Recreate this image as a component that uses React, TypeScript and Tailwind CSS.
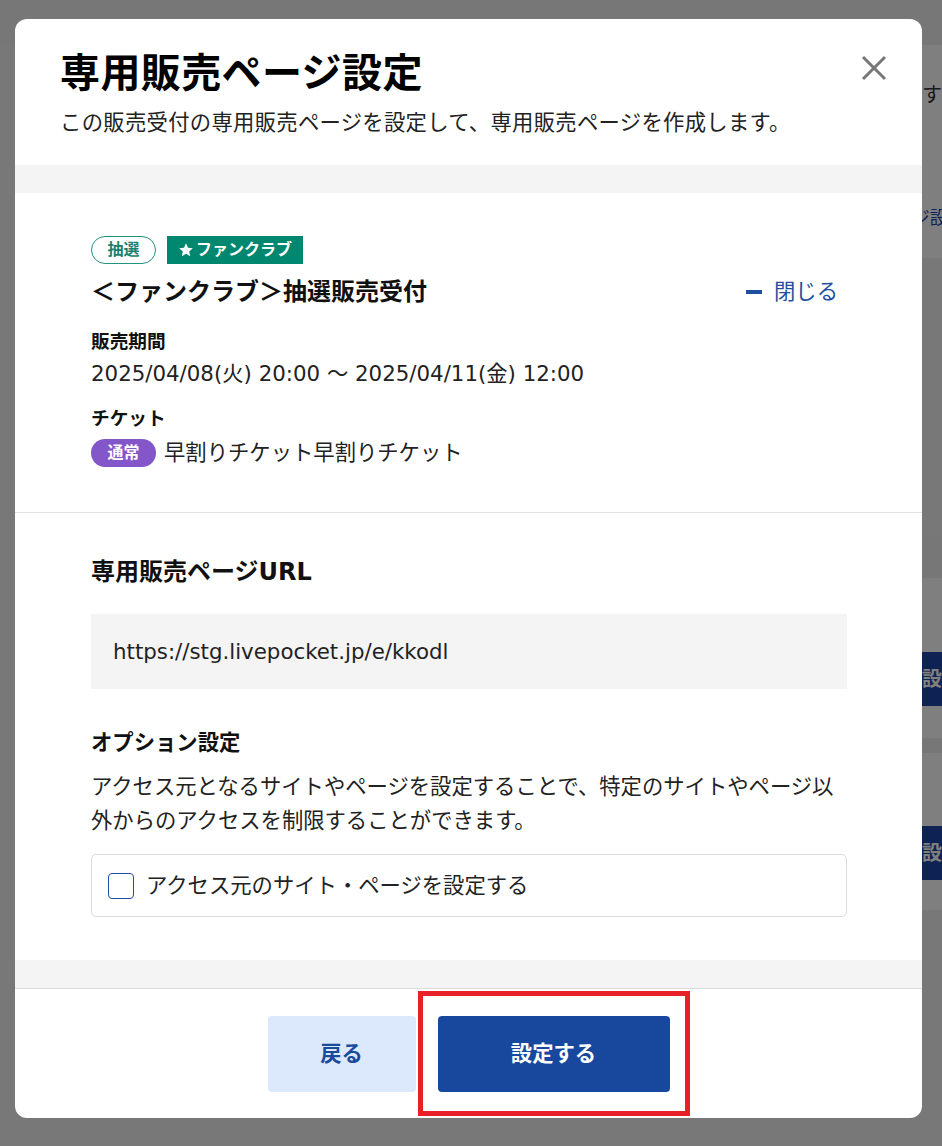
import { useState } from "react";

const StarIcon = () => (
    <svg viewBox="0 0 24 24" className="h-[16px] w-[16px] fill-white">
        <path d="M12 2l3 6.6 7.2.8-5.4 4.9 1.5 7.1L12 17.8l-6.3 3.6 1.5-7.1-5.4-4.9 7.2-.8z" />
    </svg>
);

// page behind the overlay, only the right edge shows
const BackgroundPage = () => (
    <div className="flex flex-col">
        <div className="h-[45px] bg-[#eeeeee]" />
        <div className="flex justify-end">
            <div className="flex w-[200px] flex-col">
                <div className="flex h-[213px] flex-col bg-white">
                    <p className="mt-[36px] whitespace-nowrap text-right text-[20px] leading-[28px] text-[#333]">
                        ページを設定します
                    </p>
                    <p className="mt-[95px] whitespace-nowrap pl-[134px] text-[18px] leading-[28px] text-[#1e48ac]">
                        ページ設定
                    </p>
                </div>
                <div className="h-[277px] bg-[#f0f0f0]" />
                <div className="h-[43px] bg-[#eeeeee]" />
                <div className="h-[74px] bg-white" />
                <div className="flex h-[54px] items-center whitespace-nowrap bg-[#1c44a8] pl-[180px] text-[20px] font-bold text-white">
                    設定する
                </div>
                <div className="h-[32px] bg-white" />
                <div className="h-[15px] bg-[#eeeeee]" />
                <div className="h-[73px] bg-white" />
                <div className="flex h-[54px] items-center whitespace-nowrap bg-[#1c44a8] pl-[180px] text-[20px] font-bold text-white">
                    設定する
                </div>
                <div className="h-[30px] bg-white" />
            </div>
        </div>
    </div>
);

export default function App() {
    const [checked, setChecked] = useState(false);
    const [open, setOpen] = useState(true);

    return (
        <div className="relative h-[1146px] w-full overflow-hidden bg-[#f0f0f0] font-['DejaVu_Sans','Noto_Sans_CJK_JP',sans-serif] text-[#222]">
            <BackgroundPage />

            {/* overlay */}
            <div className="absolute inset-0 bg-black/50" />

            <div className="absolute inset-0 pl-[15px] pt-[19px]">
                <div className="flex h-[1099px] w-[907px] flex-col overflow-hidden rounded-[12px] bg-white">
                    {/* Header */}
                    <div className="relative px-[45px] pb-[26px] pt-[30px]">
                        <h2 className="text-[40px] font-bold leading-[48px] tracking-[0.4px] text-black">
                            専用販売ページ設定
                        </h2>
                        <p className="mt-[10px] text-[21.33px] leading-[32px] tracking-[0.3px] text-[#222]">
                            この販売受付の専用販売ページを設定して、専用販売ページを作成します。
                        </p>
                        <button className="absolute right-[34px] top-[35px] flex h-[28px] w-[28px] items-center justify-center">
                            <svg viewBox="0 0 28 28" className="h-[28px] w-[28px]">
                                <path
                                    d="M3 3L25 25M25 3L3 25"
                                    stroke="#777"
                                    strokeWidth="3"
                                    strokeLinecap="butt"
                                />
                            </svg>
                        </button>
                    </div>

                    <div className="h-[28px] bg-[#f4f4f4]" />

                    {/* Sales info */}
                    <div className="border-b border-[#e2e2e2] pb-[45px] pl-[76px] pr-[75px] pt-[43px]">
                        <div className="flex gap-[11px]">
                            <span className="flex h-[28px] w-[65px] items-center justify-center rounded-full border border-[#23917f] text-[16px] font-bold text-[#1b7f6e]">
                                抽選
                            </span>
                            <span className="flex h-[28px] items-center gap-[2px] bg-[#00876f] px-[11px] text-[16px] font-bold text-white">
                                <StarIcon />
                                ファンクラブ
                            </span>
                        </div>
                        <div className="mt-[10px] flex h-[36px] items-center justify-between">
                            <h3 className="text-[24px] font-bold leading-[36px] text-[#111]">
                                ＜ファンクラブ＞抽選販売受付
                            </h3>
                            <button
                                onClick={() => setOpen(!open)}
                                className="mr-[9px] flex items-center gap-[12px] text-[21.33px] text-[#1e4fa0]"
                            >
                                <span className="h-[4px] w-[16px] bg-[#1e4fa0]" />
                                閉じる
                            </button>
                        </div>
                        <p className="mt-[18px] text-[18.67px] font-bold leading-[28px] text-[#111]">
                            販売期間
                        </p>
                        <p className="mt-[2px] text-[21.33px] leading-[32px]">
                            2025/04/08(火) 20:00 〜 2025/04/11(金) 12:00
                        </p>
                        <p className="mt-[15px] text-[18.67px] font-bold leading-[28px] text-[#111]">
                            チケット
                        </p>
                        <div className="mt-[6px] flex h-[28px] items-center gap-[8px]">
                            <span className="flex h-[28px] w-[65px] items-center justify-center rounded-full bg-[#8356c9] text-[16px] font-bold text-white">
                                通常
                            </span>
                            <span className="text-[21.33px]">早割りチケット早割りチケット</span>
                        </div>
                    </div>

                    {/* URL + options */}
                    <div className="pb-[43px] pl-[76px] pr-[75px] pt-[41px]">
                        <h3 className="text-[24px] font-bold leading-[36px] text-[#111]">
                            専用販売ページURL
                        </h3>
                        <div className="mt-[24px] flex h-[75px] items-center bg-[#f4f4f4] px-[22px] text-[21.33px]">
                            https://stg.livepocket.jp/e/kkodl
                        </div>
                        <h4 className="mt-[38px] text-[21.33px] font-bold leading-[32px] text-[#111]">
                            オプション設定
                        </h4>
                        <p className="mt-[11px] text-[21.33px] leading-[34px]">
                            アクセス元となるサイトやページを設定することで、特定のサイトやページ以外からのアクセスを制限することができます。
                        </p>
                        <label className="mt-[16px] flex h-[63px] cursor-pointer items-center gap-[12px] rounded-[5px] border border-[#dcdcdc] px-[16px]">
                            <input
                                type="checkbox"
                                checked={checked}
                                onChange={(e) => setChecked(e.target.checked)}
                                className="hidden"
                            />
                            <span
                                className={
                                    checked
                                        ? "h-[26px] w-[26px] rounded-[4px] border-[1.5px] border-[#1e4fa0] bg-[#1e4fa0]"
                                        : "h-[26px] w-[26px] rounded-[4px] border-[1.5px] border-[#1e4fa0] bg-white"
                                }
                            />
                            <span className="text-[21.33px]">アクセス元のサイト・ページを設定する</span>
                        </label>
                    </div>

                    <div className="h-[29px] border-b border-[#dcdcdc] bg-[#f4f4f4]" />

                    {/* Footer */}
                    <div className="flex flex-1 items-start justify-center gap-[22px] pt-[27px]">
                        <button className="h-[76px] w-[148px] rounded-[4px] bg-[#dce8fc] text-[21.33px] font-bold text-[#1b4a9c]">
                            戻る
                        </button>
                        <div className="relative">
                            <button className="h-[76px] w-[232px] rounded-[4px] bg-[#17489e] text-[21.33px] font-bold text-white">
                                設定する
                            </button>
                            <div className="pointer-events-none absolute -bottom-[24px] -left-[20px] -right-[20px] -top-[25px] border-[5px] border-[#e8202a]" />
                        </div>
                    </div>
                </div>
            </div>
        </div>
    );
}
